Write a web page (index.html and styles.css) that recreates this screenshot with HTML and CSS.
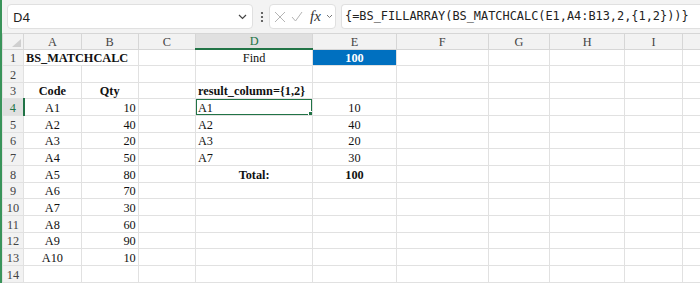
FILE: index.html
```html
<!DOCTYPE html>
<html>

<head>
    <title>BS_MATCHCALC</title>
    <link rel="stylesheet" href="styles.css">
</head>

<body>
    <div class="app">
        <div class="formula-bar">
            <div class="name-box">
                <span>D4</span>
                <svg width="9" height="6" viewBox="0 0 9 6"><path d="M1 1 L4.5 4.5 L8 1" fill="none" stroke="#444" stroke-width="1.2"/></svg>
            </div>
            <svg class="dots" width="4" height="12" viewBox="0 0 4 12"><circle cx="2" cy="2" r="1.1" fill="#444"/><circle cx="2" cy="6" r="1.1" fill="#444"/><circle cx="2" cy="10" r="1.1" fill="#444"/></svg>
            <div class="fx-box">
                <svg width="12" height="12" viewBox="0 0 12 12"><path d="M1 1 L11 11 M11 1 L1 11" fill="none" stroke="#b4b4b4" stroke-width="1"/></svg>
                <svg width="12" height="12" viewBox="0 0 12 12"><path d="M1 6 L4.5 10 L11 1" fill="none" stroke="#b4b4b4" stroke-width="1"/></svg>
                <span class="fx">fx</span>
                <svg width="7" height="5" viewBox="0 0 7 5"><path d="M1 1 L3.5 3.5 L6 1" fill="none" stroke="#777" stroke-width="1"/></svg>
            </div>
            <div class="formula">{=BS_FILLARRAY(BS_MATCHCALC(E1,A4:B13,2,{1,2}))}</div>
        </div>

        <table class="sheet">
            <colgroup>
                <col style="width: 21px">
                <col style="width: 57.7px">
                <col style="width: 57px">
                <col style="width: 57.3px">
                <col style="width: 117.3px">
                <col style="width: 83.4px">
                <col style="width: 92px">
                <col style="width: 61.3px">
                <col style="width: 75.3px">
                <col style="width: 57.4px">
                <col style="width: 60px">
            </colgroup>
            <tr class="head">
                <th class="corner"></th>
                <th>A</th><th>B</th><th>C</th><th class="active">D</th><th>E</th>
                <th>F</th><th>G</th><th>H</th><th>I</th><th></th>
            </tr>
            <tr>
                <th class="rh">1</th>
                <td colspan="2" class="bold">BS_MATCHCALC</td><td></td>
                <td class="c">Find</td><td class="c bold find">100</td>
                <td></td><td></td><td></td><td></td><td></td>
            </tr>
            <tr>
                <th class="rh">2</th>
                <td></td><td></td><td></td><td></td><td></td><td></td><td></td><td></td><td></td><td></td>
            </tr>
            <tr>
                <th class="rh">3</th>
                <td class="c bold">Code</td><td class="c bold">Qty</td><td></td>
                <td class="bold">result_column={1,2}</td><td></td>
                <td></td><td></td><td></td><td></td><td></td>
            </tr>
            <tr>
                <th class="rh active">4</th>
                <td class="c">A1</td><td class="r">10</td><td></td>
                <td class="sel">A1</td><td class="c">10</td>
                <td></td><td></td><td></td><td></td><td></td>
            </tr>
            <tr>
                <th class="rh">5</th>
                <td class="c">A2</td><td class="r">40</td><td></td>
                <td>A2</td><td class="c">40</td>
                <td></td><td></td><td></td><td></td><td></td>
            </tr>
            <tr>
                <th class="rh">6</th>
                <td class="c">A3</td><td class="r">20</td><td></td>
                <td>A3</td><td class="c">20</td>
                <td></td><td></td><td></td><td></td><td></td>
            </tr>
            <tr>
                <th class="rh">7</th>
                <td class="c">A4</td><td class="r">50</td><td></td>
                <td>A7</td><td class="c">30</td>
                <td></td><td></td><td></td><td></td><td></td>
            </tr>
            <tr>
                <th class="rh">8</th>
                <td class="c">A5</td><td class="r">80</td><td></td>
                <td class="c bold">Total:</td><td class="c bold">100</td>
                <td></td><td></td><td></td><td></td><td></td>
            </tr>
            <tr>
                <th class="rh">9</th>
                <td class="c">A6</td><td class="r">70</td>
                <td></td><td></td><td></td><td></td><td></td><td></td><td></td><td></td>
            </tr>
            <tr>
                <th class="rh">10</th>
                <td class="c">A7</td><td class="r">30</td>
                <td></td><td></td><td></td><td></td><td></td><td></td><td></td><td></td>
            </tr>
            <tr>
                <th class="rh">11</th>
                <td class="c">A8</td><td class="r">60</td>
                <td></td><td></td><td></td><td></td><td></td><td></td><td></td><td></td>
            </tr>
            <tr>
                <th class="rh">12</th>
                <td class="c">A9</td><td class="r">90</td>
                <td></td><td></td><td></td><td></td><td></td><td></td><td></td><td></td>
            </tr>
            <tr>
                <th class="rh">13</th>
                <td class="c">A10</td><td class="r">10</td>
                <td></td><td></td><td></td><td></td><td></td><td></td><td></td><td></td>
            </tr>
            <tr>
                <th class="rh">14</th>
                <td></td><td></td><td></td><td></td><td></td><td></td><td></td><td></td><td></td><td></td>
            </tr>
        </table>
    </div>
</body>

</html>
```

FILE: styles.css
```css
body {
    margin: 0;
    background: #fff;
}

.app {
    height: 283px;
    overflow: hidden;
    border-left: 2px solid #3a945a;
}

/* formula bar */
.formula-bar {
    display: flex;
    align-items: center;
    height: 33px;
    padding-left: 5px;
    background: #f3f3f3;
    box-sizing: border-box;
}

.name-box {
    display: flex;
    align-items: center;
    justify-content: space-between;
    width: 246px;
    height: 25px;
    padding: 0 5px 0 5px;
    box-sizing: border-box;
    background: #fff;
    border: 1px solid #e0e0e0;
    border-radius: 4px;
    font-family: "Noto Sans", sans-serif;
    font-size: 13px;
    color: #222;
}

.dots {
    margin-left: 7px;
}

.fx-box {
    display: flex;
    align-items: center;
    gap: 5px;
    width: 67px;
    height: 25px;
    margin-left: 5px;
    padding-left: 4px;
    box-sizing: border-box;
    background: #fff;
    border: 1px solid #e0e0e0;
    border-radius: 4px;
}

.fx {
    font-family: "Liberation Serif", serif;
    font-style: italic;
    font-size: 15px;
    color: #333;
    margin-left: 2px;
}

.formula {
    flex: 1;
    height: 25px;
    margin-left: 5px;
    padding-left: 3px;
    box-sizing: border-box;
    background: #fff;
    border: 1px solid #e0e0e0;
    border-right: none;
    border-radius: 4px 0 0 4px;
    font-family: "DejaVu Sans Mono", monospace;
    font-size: 11.9px;
    line-height: 23px;
    color: #222;
    white-space: nowrap;
}

/* grid */
.sheet {
    border-collapse: collapse;
    table-layout: fixed;
    width: 740px;
    font-family: "Liberation Serif", serif;
    font-size: 12.3px;
    color: #111;
}

.sheet td,
.sheet th {
    height: 16.67px;
    padding: 0 2px;
    border: 1px solid #e1e1e1;
    line-height: 14px;
    vertical-align: bottom;
    white-space: nowrap;
    overflow: hidden;
    box-sizing: border-box;
}

.head th {
    height: 15.3px;
    background: #f2f2f2;
    border-color: #d6d6d6;
    font-weight: normal;
    color: #444;
    text-align: center;
}

.head th.active {
    background: #e0e0e0;
    color: #217346;
    border-bottom: 2px solid #217346;
}

.corner {
    position: relative;
}

.corner::after {
    content: "";
    position: absolute;
    right: 2px;
    bottom: 2px;
    border-left: 9px solid transparent;
    border-bottom: 8px solid #cfcfcf;
}

.rh {
    background: #f2f2f2;
    border-color: #d6d6d6;
    font-weight: normal;
    color: #444;
    text-align: center;
}

.rh.active {
    background: #e0e0e0;
    color: #217346;
    border-right: 2px solid #217346;
}

.bold {
    font-weight: bold;
}

.c {
    text-align: center;
}

.r {
    text-align: right;
}

.find {
    background: #0070c0;
    color: #fff;
}

.sel {
    position: relative;
}

.sel::before {
    content: "";
    position: absolute;
    inset: -1px;
    border: 2px solid #217346;
}

.sel::after {
    content: "";
    position: absolute;
    right: -3px;
    bottom: -3px;
    width: 5px;
    height: 5px;
    background: #217346;
    border: 1px solid #fff;
}
```
